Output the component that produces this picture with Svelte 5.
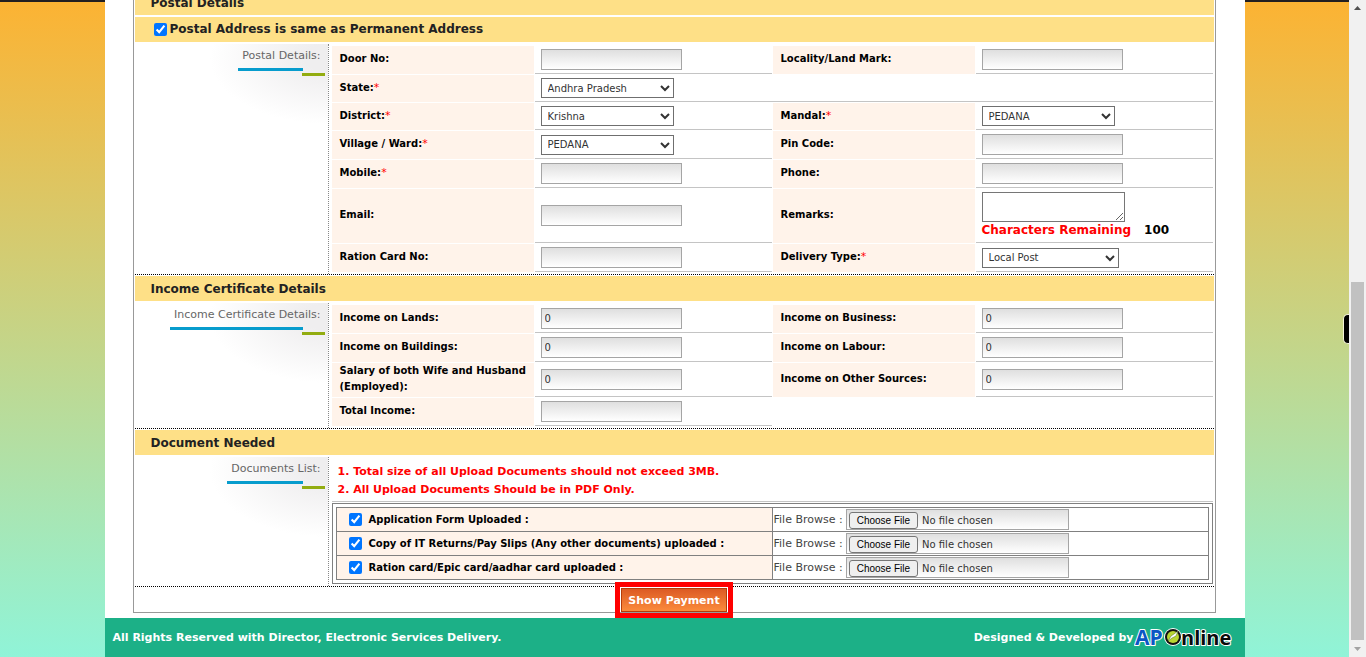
<script>
  let sameAddress = $state(true);
  let remarks = $state('');

  const postalFields = [
    { id: 'door', label: 'Door No:' },
    { id: 'locality', label: 'Locality/Land Mark:' },
    { id: 'state', label: 'State:', required: true, type: 'select', value: 'Andhra Pradesh', full: true },
    { id: 'district', label: 'District:', required: true, type: 'select', value: 'Krishna' },
    { id: 'mandal', label: 'Mandal:', required: true, type: 'select', value: 'PEDANA' },
    { id: 'village', label: 'Village / Ward:', required: true, type: 'select', value: 'PEDANA' },
    { id: 'pin', label: 'Pin Code:' },
    { id: 'mobile', label: 'Mobile:', required: true },
    { id: 'phone', label: 'Phone:' },
    { id: 'email', label: 'Email:' },
    { id: 'remarks', label: 'Remarks:', type: 'textarea' },
    { id: 'ration', label: 'Ration Card No:' },
    { id: 'delivery', label: 'Delivery Type:', required: true, type: 'select', value: 'Local Post', wide: true }
  ];

  const incomeFields = [
    { id: 'lands', label: 'Income on Lands:', value: '0' },
    { id: 'business', label: 'Income on Business:', value: '0' },
    { id: 'buildings', label: 'Income on Buildings:', value: '0' },
    { id: 'labour', label: 'Income on Labour:', value: '0' },
    { id: 'salary', label: 'Salary of both Wife and Husband (Employed):', value: '0' },
    { id: 'other', label: 'Income on Other Sources:', value: '0' },
    { id: 'total', label: 'Total Income:', value: '' }
  ];

  const documents = [
    { id: 'form', label: 'Application Form Uploaded :' },
    { id: 'returns', label: 'Copy of IT Returns/Pay Slips (Any other documents) uploaded :' },
    { id: 'card', label: 'Ration card/Epic card/aadhar card uploaded :' }
  ];
</script>

{#snippet fieldGrid(fields)}
  <div class="fields">
    {#each fields as field}
      <label class="name" for={field.id}>
        <span>{field.label}{#if field.required}<em>*</em>{/if}</span>
      </label>
      <div class="value" class:full={field.full}>
        {#if field.type === 'select'}
          <select id={field.id} class:wide={field.wide}>
            <option>{field.value}</option>
          </select>
        {:else if field.type === 'textarea'}
          <div class="remarks">
            <textarea id={field.id} maxlength="100" bind:value={remarks}></textarea>
            <p><span>Characters Remaining</span> <b>{100 - remarks.length}</b></p>
          </div>
        {:else}
          <input type="text" id={field.id} value={field.value ?? ''} />
        {/if}
      </div>
    {/each}
  </div>
{/snippet}

<div class="page">
  <div class="backdrop">
    <div class="container">
      <main>
        <form onsubmit={(e) => e.preventDefault()}>
          <h2>Postal Details</h2>
          <h2 class="same">
            <input type="checkbox" id="same" bind:checked={sameAddress} />
            <label for="same">Postal Address is same as Permanent Address</label>
          </h2>
          <section>
            <aside><h3>Postal Details:</h3></aside>
            {@render fieldGrid(postalFields)}
          </section>

          <h2>Income Certificate Details</h2>
          <section>
            <aside><h3>Income Certificate Details:</h3></aside>
            {@render fieldGrid(incomeFields)}
          </section>

          <h2>Document Needed</h2>
          <section>
            <aside><h3>Documents List:</h3></aside>
            <div class="documents">
              <div class="notes">
                <p>1. Total size of all Upload Documents should not exceed 3MB.</p>
                <p>2. All Upload Documents Should be in PDF Only.</p>
              </div>
              <div class="table-frame">
                <table>
                  <tbody>
                    {#each documents as doc}
                      <tr>
                        <th scope="row">
                          <div class="cell">
                            <input type="checkbox" id={doc.id} checked />
                            <label for={doc.id}>{doc.label}</label>
                          </div>
                        </th>
                        <td>
                          <div class="cell">
                            <label for="{doc.id}-file">File Browse :</label>
                            <input type="file" id="{doc.id}-file" />
                          </div>
                        </td>
                      </tr>
                    {/each}
                  </tbody>
                </table>
              </div>
            </div>
          </section>

          <div class="actions">
            <div class="highlight"><button type="submit">Show Payment</button></div>
          </div>
        </form>
      </main>

      <footer>
        <p>All Rights Reserved with Director, Electronic Services Delivery.</p>
        <div class="credit">
          <p>Designed &amp; Developed by</p>
          <a href="#aponline" aria-label="APOnline">
            <svg width="100" height="32" viewBox="0 0 100 32">
              <g class="logo-text">
                <text x="1" y="23" fill="#0b57c4">AP</text>
                <text class="dark" x="47" y="23" fill="#0a0a0a">nline</text>
              </g>
              <ellipse cx="39" cy="15" rx="9" ry="9" fill="#fff" />
              <ellipse cx="39" cy="15" rx="8" ry="8" fill="#111" />
              <ellipse cx="39" cy="15" rx="6" ry="6" fill="#b9d532" />
              <path d="M34 19 L37 14 L40 12 L44 9 L42 14 L38 16 Z" fill="#fff" stroke="#4d6b1c" stroke-width="0.5" />
            </svg>
          </a>
        </div>
      </footer>
    </div>
    <div class="side-tab"></div>
  </div>

  <div class="scrollbar">
    <svg width="17" height="17" viewBox="0 0 17 17"><path d="M5 10 L8.500 6 L12 10 Z" fill="#505050" /></svg>
    <div class="track"><div class="thumb"></div></div>
    <svg width="17" height="17" viewBox="0 0 17 17"><path d="M5 7 L8.500 11 L12 7 Z" fill="#a3a3a3" /></svg>
  </div>
</div>

<style>
  :global(body) {
    margin: 0;
  }

  .page {
    display: flex;
    height: 100vh;
    overflow: hidden;
    font-family: Verdana, 'DejaVu Sans', sans-serif;
    font-size: 11px;
    color: #000;
  }

  .page * {
    box-sizing: border-box;
  }

  p,
  h2,
  h3 {
    margin: 0;
  }

  .backdrop {
    position: relative;
    flex: 1;
    border-top: 2px solid #231f20;
    background: linear-gradient(#fcb333, #90f4d8);
  }

  .container {
    display: flex;
    flex-direction: column;
    max-width: 1140px;
    height: 100vh;
    margin: -2px auto 0;
    background: #fff;
  }

  main {
    padding: 0 29px 5px 28px;
  }

  form {
    margin-top: -10px;
    padding: 0 1px;
    border: 1px solid #999;
    border-top: 0;
  }

  /* Section headings */
  h2 {
    height: 25px;
    padding-left: 16px;
    font-size: 12px;
    line-height: 26px;
    color: #222;
    background: #fee087;
  }

  h2.same {
    display: flex;
    align-items: center;
    gap: 3px;
    margin-top: 2px;
    padding-left: 19px;
  }

  h2.same label {
    line-height: 25px;
  }

  input[type='checkbox'] {
    width: 13px;
    height: 13px;
    margin: 0;
    accent-color: #0075ff;
  }

  section {
    display: grid;
    grid-template-columns: 194px 1fr;
    padding-top: 2px;
    border-bottom: 1px dotted #000;
    margin-bottom: 1px;
  }

  aside {
    text-align: right;
    padding-right: 3px;
    border-right: 1px dotted #888;
    background: radial-gradient(ellipse 118px 66px at 100% 14px, #efeeef 20%, #fff);
    background-size: 118px 80px;
    background-position: right top;
    background-repeat: no-repeat;
  }

  h3 {
    position: relative;
    display: inline-block;
    height: 32px;
    padding: 0 4px;
    font-size: 11px;
    font-weight: normal;
    line-height: 23px;
    color: #666;
  }

  h3::before {
    content: '';
    position: absolute;
    left: 0;
    right: 22px;
    bottom: 5px;
    height: 3px;
    background: #079ccd;
  }

  h3::after {
    content: '';
    position: absolute;
    right: 0;
    bottom: 0;
    width: 23px;
    height: 3px;
    background: #92ac10;
  }

  /* Form fields */
  .fields {
    display: grid;
    grid-template-columns: 202px 1fr 202px 1fr;
    gap: 1px;
    padding: 2px 1px 2px 3px;
  }

  .name {
    display: flex;
    align-items: center;
    padding: 0 0 2px 8px;
    font-size: 10px;
    font-weight: bold;
    line-height: 16px;
    background: #fff3ea;
  }

  .name em {
    font-size: 11px;
    font-style: normal;
    font-weight: normal;
    line-height: 1;
    color: #f00;
  }

  .value {
    display: flex;
    align-items: center;
    padding: 3px 6px;
    border-bottom: 1px solid #c4c4c4;
  }

  .value.full {
    grid-column: span 3;
  }

  input[type='text'],
  input[type='file'] {
    width: 141px;
    height: 21px;
    padding: 0 3px;
    border: 1px solid #a5a5a5;
    font-family: inherit;
    font-size: 10px;
    color: #333;
    background: linear-gradient(#dfdfdf, #fff);
  }

  select {
    width: 133px;
    height: 20px;
    padding: 0 2px;
    border: 1px solid #6f6f6f;
    border-radius: 0;
    font-family: inherit;
    font-size: 10px;
    color: #333;
    background: #fff;
  }

  select.wide {
    width: 137px;
  }

  textarea {
    display: block;
    width: 143px;
    height: 30px;
    border: 1px solid #767676;
    font-family: inherit;
    font-size: 10px;
  }

  .remarks p {
    display: flex;
    gap: 13px;
    font-size: 12px;
    font-weight: bold;
    line-height: 17px;
  }

  .remarks span,
  .notes {
    color: #f00;
  }

  /* Documents */
  .documents {
    padding: 6px 1px 2px 3px;
  }

  .notes {
    padding: 0 6px 2px;
    border-bottom: 1px solid #c4c4c4;
    font-weight: bold;
    line-height: 18px;
  }

  .table-frame {
    margin-top: 1px;
    padding: 3px;
    border: 1px solid #808080;
  }

  table {
    width: 100%;
    border-collapse: collapse;
  }

  th,
  td {
    height: 24px;
    padding: 0;
    border: 1px solid #808080;
  }

  th {
    width: 50%;
    font-size: 10px;
    text-align: left;
    background: #fff3ea;
  }

  .cell {
    display: flex;
    align-items: center;
  }

  th .cell {
    gap: 7px;
    padding-left: 12px;
  }

  td .cell {
    gap: 3px;
    padding-left: 1px;
    color: #444;
  }

  input[type='file'] {
    width: 223px;
    padding: 2px;
  }

  input[type='file']::file-selector-button {
    height: 17px;
    margin-right: 4px;
    padding: 0 7px;
    border: 1px solid #767676;
    border-radius: 3px;
    font-family: Arial, 'Liberation Sans', sans-serif;
    font-size: 10px;
    background: #efefef;
  }

  .actions {
    display: flex;
    justify-content: center;
    height: 24px;
  }

  .highlight {
    z-index: 1;
    height: 26px;
    margin-top: -1px;
    padding: 1px;
    outline: 5px solid #f00;
  }

  button {
    display: block;
    height: 24px;
    padding: 0 6px;
    border: 1px solid #b43c08;
    font-family: inherit;
    font-size: 11px;
    font-weight: bold;
    color: #fff;
    background: linear-gradient(#dc5a24, #fb8b3c);
  }

  /* Footer */
  footer {
    display: flex;
    flex: 1;
    align-items: center;
    justify-content: space-between;
    padding: 0 11px 0 8px;
    font-weight: bold;
    color: #fff;
    background: #1cb087;
  }

  .credit {
    display: flex;
    align-items: center;
  }

  .credit a,
  .credit svg {
    display: block;
  }

  .logo-text {
    font-family: 'Open Sans', sans-serif;
    font-size: 21px;
    font-weight: 700;
    stroke: #fff;
    stroke-width: 2px;
    stroke-linejoin: round;
    paint-order: stroke;
  }

  .logo-text .dark {
    font-size: 20px;
  }

  .side-tab {
    position: absolute;
    right: 0;
    top: 312px;
    width: 6px;
    height: 30px;
    border: 1px solid #f4f4d8;
    border-right: 0;
    border-radius: 5px 0 0 5px;
    background: #000;
  }

  .scrollbar {
    display: flex;
    flex-direction: column;
    width: 17px;
    background: #f1f1f1;
  }

  .scrollbar svg {
    display: block;
  }

  .track {
    display: flex;
    flex: 1;
    flex-direction: column;
    justify-content: flex-end;
    padding: 0 2px;
  }

  .thumb {
    height: 57.500%;
    background: #c1c1c1;
  }
</style>
